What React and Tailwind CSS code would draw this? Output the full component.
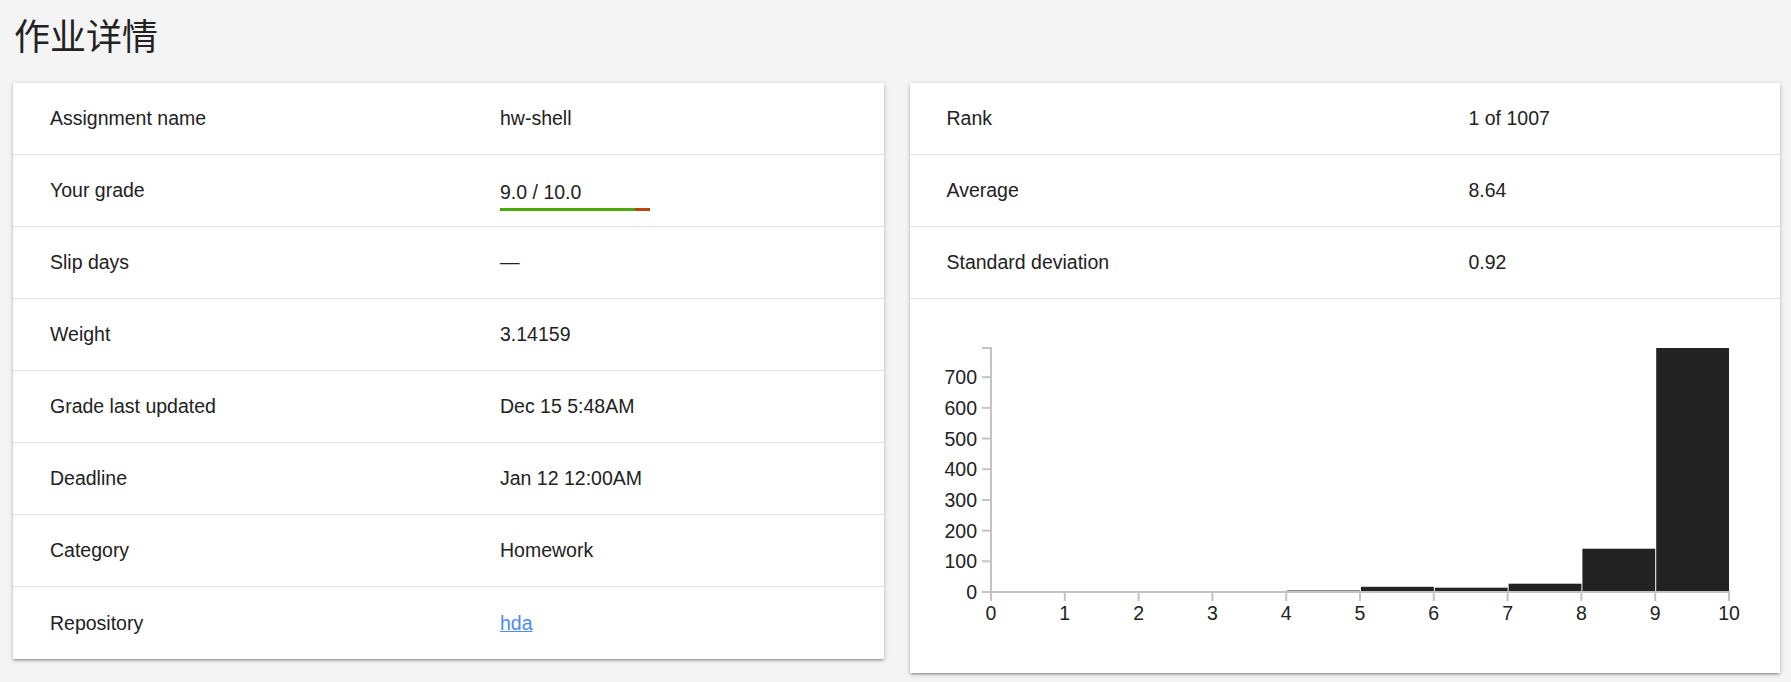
const details = [
  { label: "Assignment name", value: "hw-shell" },
  { label: "Your grade", grade: { score: 9.0, max: 10.0 } },
  { label: "Slip days", value: "—" },
  { label: "Weight", value: "3.14159" },
  { label: "Grade last updated", value: "Dec 15 5:48AM" },
  { label: "Deadline", value: "Jan 12 12:00AM" },
  { label: "Category", value: "Homework" },
  { label: "Repository", link: "hda" },
];

const stats = [
  { label: "Rank", value: "1 of 1007" },
  { label: "Average", value: "8.64" },
  { label: "Standard deviation", value: "0.92" },
];

const bins = [0, 0, 0, 0, 5, 17, 14, 27, 141, 795];

const cardClass =
  "flex-1 bg-white shadow-[0_2px_2px_0_rgba(0,0,0,0.14),0_3px_1px_-2px_rgba(0,0,0,0.12),0_1px_5px_0_rgba(0,0,0,0.2)]";

function GradeBar({ score, max }) {
  const pct = (score / max) * 100;
  return (
    <div className="mt-[10px] flex flex-col">
      <span>
        {score.toFixed(1)} / {max.toFixed(1)}
      </span>
      <div className="mt-[4px] flex h-[3px] w-[150px]">
        <div className="h-full bg-[#4aa80c]" style={{ width: `${pct}%` }}></div>
        <div className="h-full flex-1 bg-[#b5480a]"></div>
      </div>
    </div>
  );
}

function Histogram() {
  const x0 = 81;
  const step = 73.8;
  const y0 = 293;
  const yTop = 49;
  const maxVal = 795;
  const sy = (v) => y0 - ((y0 - yTop) * v) / maxVal;
  const yTicks = [0, 100, 200, 300, 400, 500, 600, 700];

  return (
    <svg width="100%" height="374" className="block">
      {bins.map((v, i) =>
        v > 0 ? (
          <rect
            key={i}
            x={x0 + i * step + 1}
            y={sy(v)}
            width={step - 1}
            height={y0 - sy(v)}
            fill="#222222"
          />
        ) : null
      )}

      {/* y axis */}
      <path
        d={`M${x0 - 9},${yTop} H${x0} V${y0} H${x0 - 9}`}
        fill="none"
        stroke="#c3c3c3"
        strokeWidth="2"
      />
      {yTicks.map((t) => (
        <g key={t}>
          <line x1={x0 - 9} x2={x0} y1={sy(t)} y2={sy(t)} stroke="#c3c3c3" strokeWidth="2" />
          <text
            x={x0 - 14}
            y={sy(t) + 7}
            textAnchor="end"
            fontSize="19.5"
            fill="#222222"
            fontFamily="'Liberation Sans', Arial, sans-serif"
          >
            {t}
          </text>
        </g>
      ))}

      {/* x axis */}
      <path
        d={`M${x0},${y0 + 9} V${y0} H${x0 + 10 * step} V${y0 + 9}`}
        fill="none"
        stroke="#c3c3c3"
        strokeWidth="2"
      />
      {Array.from({ length: 11 }, (_, i) => (
        <g key={i}>
          <line
            x1={x0 + i * step}
            x2={x0 + i * step}
            y1={y0}
            y2={y0 + 9}
            stroke="#c3c3c3"
            strokeWidth="2"
          />
          <text
            x={x0 + i * step}
            y={y0 + 28}
            textAnchor="middle"
            fontSize="19.5"
            fill="#222222"
            fontFamily="'Liberation Sans', Arial, sans-serif"
          >
            {i}
          </text>
        </g>
      ))}
    </svg>
  );
}

export default function App() {
  return (
    <div className="min-h-screen bg-[#f4f4f4] pt-[12px] pl-[13px] pr-[11px] font-['Liberation_Sans',Arial,sans-serif] text-[#222222]">
      <h1 className="mb-[27px] pl-[1px] font-['Noto_Sans_CJK_SC',sans-serif] text-[36px] leading-[44px] font-normal">
        作业详情
      </h1>

      <div className="flex items-start gap-[26px]">
        <div className={cardClass}>
          {details.map((d) => (
            <div
              key={d.label}
              className="flex h-[72px] items-center border-b border-[#e0e0e0] text-[19.5px] leading-[23px] last:border-b-0"
            >
              <div className="w-[487px] pl-[37px]">{d.label}</div>
              <div className="flex-1">
                {d.grade ? (
                  <GradeBar score={d.grade.score} max={d.grade.max} />
                ) : d.link ? (
                  <a href="#" className="text-[#4a8af4] underline">
                    {d.link}
                  </a>
                ) : (
                  d.value
                )}
              </div>
            </div>
          ))}
        </div>

        <div className={cardClass}>
          {stats.map((s) => (
            <div
              key={s.label}
              className="flex h-[72px] items-center border-b border-[#e0e0e0] text-[19.5px] leading-[23px]"
            >
              <div className="w-[559px] pl-[37px]">{s.label}</div>
              <div className="flex-1">{s.value}</div>
            </div>
          ))}
          <Histogram />
        </div>
      </div>
    </div>
  );
}
